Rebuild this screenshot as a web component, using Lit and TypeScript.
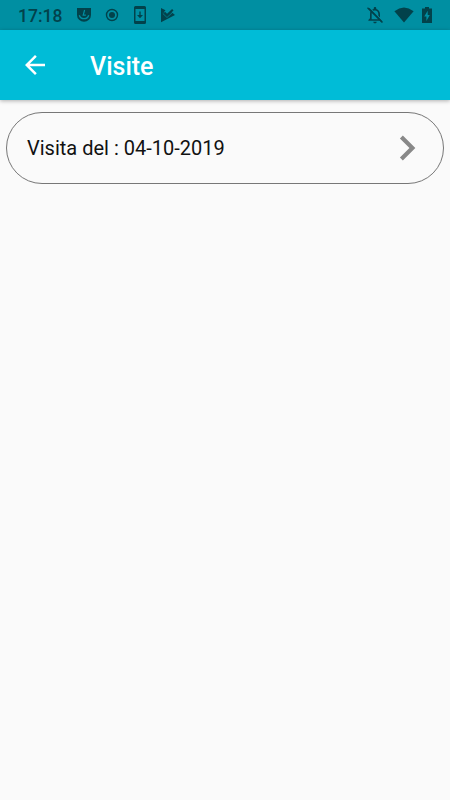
import { LitElement, html, css } from "lit";
import { customElement } from "lit/decorators.js";

@customElement("status-bar")
class StatusBar extends LitElement {
  static styles = css`
    :host {
      display: flex;
      align-items: center;
      height: 30px;
      box-sizing: border-box;
      padding: 0 15px 0 18px;
      background: #008fa2;
      color: #02424b;
      font: 500 17.5px/30px Roboto, sans-serif;
    }
    .time { width: 58px; padding-top: 2px; }
    svg { display: block; fill: currentColor; }
    .left { display: flex; align-items: center; gap: 12px; }
    .right { display: flex; align-items: center; margin-left: auto; }
    .bell { margin-right: 9px; }
    .wifi { margin-right: 5px; }
    .line { fill: none; stroke: currentColor; }
    .cut { fill: none; stroke: #008fa2; }
  `;
  render() {
    return html`
      <span class="time">17:18</span>
      <div class="left">
        <svg width="16" height="16" viewBox="0 0 16 16">
          <path d="M1 1H15V8A7 6.7 0 0 1 1 8Z" />
          <path class="cut" d="M3.3 8.2Q4.3 11.7 8 11.7T12.7 8.2" stroke-width="1.3" />
          <path class="cut" d="M8.6 3L7.2 8.2H9.8" stroke-width="1.2" />
        </svg>
        <svg width="16" height="16" viewBox="0 0 16 16">
          <circle class="line" cx="8" cy="8" r="5.5" stroke-width="1.4" />
          <circle cx="8" cy="8" r="3" />
        </svg>
        <svg width="16" height="18" viewBox="0 0 16 18">
          <path fill-rule="evenodd" d="M3.5 0H12.5Q14 0 14 1.5V16.5Q14 18 12.5 18H3.5Q2 18 2 16.5V1.5Q2 0 3.5 0ZM3.5 3V15H12.5V3ZM7.3 5.5H8.7V9H11L8 12.3 5 9H7.3Z" />
        </svg>
        <svg width="16" height="16" viewBox="0 0 16 16">
          <path d="M1 1L5.5 3.3 3.6 5.4 7 9 11.5 4.9 15 7.9 1 15.2Z" />
          <path class="cut" d="M2.8 6.4L7 10.4 14.4 3.6" stroke-width="0.8" />
          <path class="line" d="M4.3 5.4L7 8.2 12.8 2.7" stroke-width="2.1" />
        </svg>
      </div>
      <div class="right">
        <svg class="bell" width="20" height="20" viewBox="0 0 24 24">
          <path d="M20 18.69L7.84 6.14 5.27 3.49 4 4.76l2.8 2.8v.01c-.52.99-.8 2.16-.8 3.42v5l-2 2v1h13.73l2 2L21 19.72l-1-1.03zM8 17v-6c0-.69.1-1.33.29-1.92L16.15 17H8zm4 5c1.11 0 2-.89 2-2h-4c0 1.11.89 2 2 2zm4-9.15l2 2.05V11c0-3.08-1.64-5.64-4.5-6.32V4c0-.83-.67-1.5-1.5-1.5s-1.5.67-1.5 1.5v.68c-.7.16-1.33.44-1.88.81l1.45 1.49A3.6 3.6 0 0 1 12 6.5c2.49 0 4 2.02 4 4.5z" />
          <path class="line" d="M3 3.4L21 21" stroke-width="1.6" />
        </svg>
        <svg class="wifi" width="20" height="16" viewBox="0 0 20 16">
          <path d="M0.4 4.2Q10-3.2 19.6 4.2L10 15.6Z" />
        </svg>
        <svg width="16" height="18" viewBox="0 0 16 18">
          <path fill-rule="evenodd" d="M6 1H10V2.5H13V17H3V2.5H6ZM8.7 4.8L5.2 10.5H7.4V15L10.8 9H8.7Z" />
        </svg>
      </div>
    `;
  }
}

@customElement("app-header")
class AppHeader extends LitElement {
  static styles = css`
    :host {
      display: flex;
      align-items: center;
      height: 70px;
      padding-left: 20px;
      background: #00bcd7;
      color: #fff;
      box-shadow: 0 1px 4px rgba(0, 0, 0, 0.3);
      font: 500 25px/30px Roboto, sans-serif;
    }
    svg { display: block; fill: currentColor; }
    .title { margin-left: 40px; padding-top: 3px; }
  `;
  render() {
    return html`
      <svg width="30" height="30" viewBox="0 0 24 24">
        <path d="M20 11H7.83l5.59-5.59L12 4l-8 8 8 8 1.41-1.41L7.83 13H20v-2z" />
      </svg>
      <span class="title">Visite</span>
    `;
  }
}

@customElement("app-root")
class AppRoot extends LitElement {
  static styles = css`
    :host {
      display: flex;
      flex-direction: column;
      height: 100vh;
      background: #fafafa;
      font-family: Roboto, sans-serif;
    }
    .card {
      display: flex;
      align-items: center;
      justify-content: space-between;
      box-sizing: border-box;
      height: 72px;
      margin: 12px 6px 0;
      padding: 0 11px 0 20px;
      border: 1px solid #777;
      border-radius: 36px;
      color: #111;
      font-size: 20px;
    }
    .chevron { display: block; fill: #888; }
  `;
  render() {
    return html`
      <status-bar></status-bar>
      <app-header></app-header>
      <div class="card">
        <span>Visita del : 04-10-2019</span>
        <svg class="chevron" width="50" height="50" viewBox="0 0 24 24">
          <path d="M10 6L8.59 7.41 13.17 12l-4.58 4.59L10 18l6-6z" />
        </svg>
      </div>
    `;
  }
}
